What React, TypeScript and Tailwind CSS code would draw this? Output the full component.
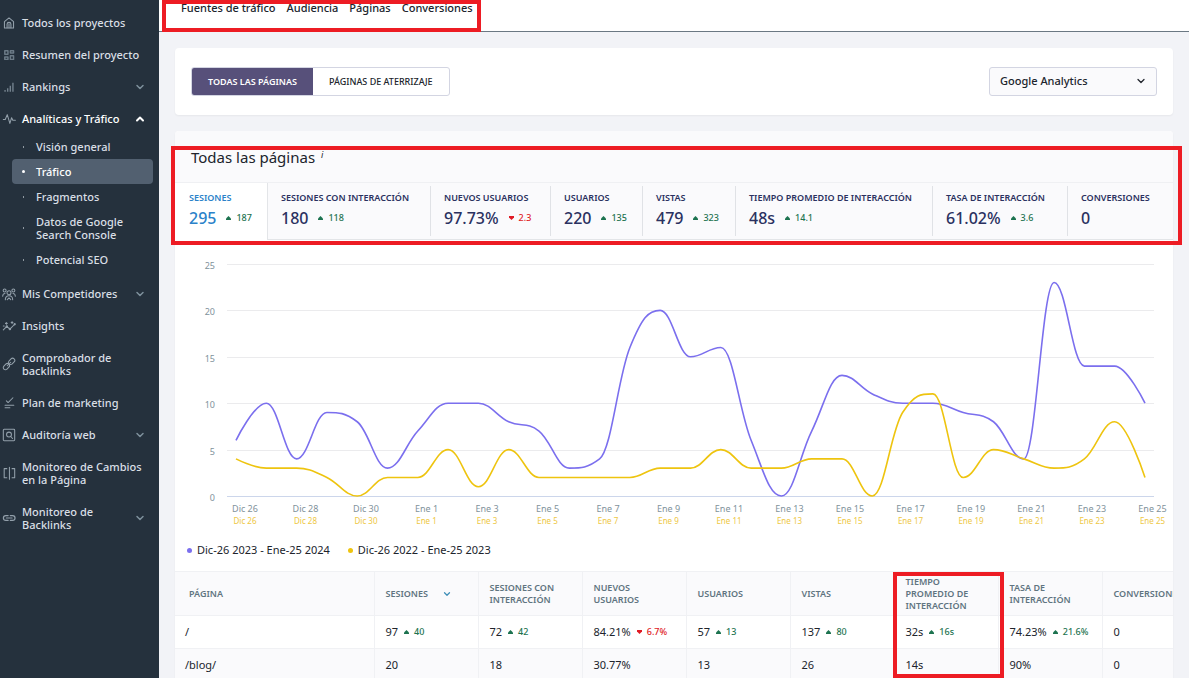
import React, { type ReactNode } from "react";
import { ChevronDown, ChevronUp } from "lucide-react";

type Item = {
  label: string;
  icon: ReactNode;
  chevron?: "down" | "up";
  active?: boolean;
  children?: string[];
};

const Icon = ({ children }: { children: ReactNode }) => (
  <svg
    viewBox="0 0 16 16"
    className="-my-1 h-3.5 w-3.5 shrink-0 text-[#93a0ab]"
    fill="none"
    stroke="currentColor"
    strokeWidth="1.2"
    strokeLinecap="round"
    strokeLinejoin="round"
    aria-hidden="true"
  >
    {children}
  </svg>
);

const items: Item[] = [
  {
    label: "Todos los proyectos",
    icon: (
      <Icon>
        <path d="M2.8 6.5 8 2.2l5.200 4.300v7.300H2.800z" />
        <path d="M5.800 13.500V9.500a2.200 2.200 0 0 1 4.400 0v4M8 9v4.500" />
      </Icon>
    ),
  },
  {
    label: "Resumen del proyecto",
    icon: (
      <Icon>
        <g className="text-[#6b7a86]" stroke="currentColor" strokeWidth="1.7">
          <rect x="3.2" y="3.2" width="3.6" height="4" />
          <rect x="9.6" y="3.2" width="3.6" height="2.400" />
          <rect x="3.2" y="10.400" width="3.6" height="2.600" />
          <rect x="9.6" y="8.800" width="3.6" height="4.200" />
        </g>
      </Icon>
    ),
  },
  {
    label: "Rankings",
    chevron: "down",
    icon: (
      <Icon>
        <path d="M3.500 11.500v2M6.500 9.500v4M9.500 6.500v7M12.500 3v10.500" strokeWidth="1.600" strokeLinecap="butt" className="text-[#73818d]" stroke="currentColor" />
      </Icon>
    ),
  },
  {
    label: "Analíticas y Tráfico",
    chevron: "up",
    active: true,
    icon: (
      <Icon>
        <path d="M1.500 8.500h2.200L6 3l3 10 2-6.500 1.300 3h3" />
      </Icon>
    ),
    children: ["Visión general", "Tráfico", "Fragmentos", "Datos de Google Search Console", "Potencial SEO"],
  },
  {
    label: "Mis Competidores",
    chevron: "down",
    icon: (
      <Icon>
        <circle cx="8" cy="6.5" r="2.3" />
        <circle cx="3" cy="4" r="1.7" />
        <circle cx="13" cy="4" r="1.7" />
        <path d="M3.8 14.5c0-3 1.8-4.6 4.2-4.6s4.2 1.6 4.2 4.6M.8 10.5c0-1.800 1-3 2.600-3M15.200 10.500c0-1.800-1-3-2.600-3M6 14.500l2-2 2 2" />
      </Icon>
    ),
  },
  {
    label: "Insights",
    icon: (
      <Icon>
        <path d="M1.500 12.500 5.500 8.500l3.500 3L14.500 6M5 4v2M4 5h2M11.500 3v2M10.500 4h2M1.500 8h1" />
        <circle cx="5.500" cy="8.500" r=".8" />
        <circle cx="9" cy="11.500" r=".8" />
        <circle cx="14.500" cy="6" r=".7" />
      </Icon>
    ),
  },
  {
    label: "Comprobador de backlinks",
    icon: (
      <Icon>
        <rect x="7" y="2.500" width="8" height="5" rx="2.500" transform="rotate(-45 11 5)" />
        <rect x="1" y="8.500" width="8" height="5" rx="2.500" transform="rotate(-45 5 11)" />
        <path d="M6 10l4-4" />
      </Icon>
    ),
  },
  {
    label: "Plan de marketing",
    icon: (
      <Icon>
        <path d="M5 5.500 7 7.500l5.500-5.500M3.500 10.500h10M3.500 13.500h5.500" />
      </Icon>
    ),
  },
  {
    label: "Auditoría web",
    chevron: "down",
    icon: (
      <Icon>
        <rect x="1.500" y="1.500" width="13" height="13" rx="1" />
        <circle cx="8" cy="7.500" r="2.800" />
        <path d="m10 9.700 2 2.300" />
      </Icon>
    ),
  },
  {
    label: "Monitoreo de Cambios en la Página",
    icon: (
      <Icon>
        <path d="M5.500 3h-3v10.500h3M11.500 3h3v10.500h-3M8.500 1.500v13.500" />
      </Icon>
    ),
  },
  {
    label: "Monitoreo de Backlinks",
    chevron: "down",
    icon: (
      <Icon>
        <path d="M7 5.200H4.400a2.800 2.800 0 0 0 0 5.600H7M9.500 5.200h2.600a2.800 2.800 0 0 1 0 5.600H9.500M5 8h6.500" strokeWidth="1.400" />
      </Icon>
    ),
  },
];

function Sidebar() {
  return (
    <aside className="w-[159px] shrink-0 bg-[#25313d] pt-[7px] text-[11px] leading-[13px] font-medium text-[#d9dfe5]">
      <nav aria-label="Principal">
        <ul>
          {items.map((item) => (
            <li key={item.label}>
              <a href="#" className={`flex min-h-8 items-center pt-[9px] pr-[13px] pb-2.5 pl-0.5 ${item.active ? "text-white" : ""}`}>
                {item.icon}
                <span className="ml-1.5 flex-1">{item.label}</span>
                {item.chevron === "down" && <ChevronDown className="h-3 w-3 shrink-0 text-[#7e909c]" strokeWidth={3} />}
                {item.chevron === "up" && <ChevronUp className="h-3 w-3 shrink-0" strokeWidth={4} />}
              </a>
              {item.children && (
                <ul className="-mt-px mb-1.5 pr-1.5 pl-3">
                  {item.children.map((c) => {
                    const current = c === "Tráfico";
                    return (
                      <li key={c}>
                        <a
                          href="#"
                          aria-current={current ? "page" : undefined}
                          className={`flex items-center rounded-sm py-1.5 pl-2.5 ${current ? "bg-[#526070] text-white" : ""}`}
                        >
                          <span className="flex w-[3px] justify-center">
                            <span className={`bg-current ${current ? "h-[3px] w-[3px] rounded-full" : "h-0.5 w-px opacity-60"}`} />
                          </span>
                          <span className="ml-[11px] max-w-24 flex-1">{c}</span>
                        </a>
                      </li>
                    );
                  })}
                </ul>
              )}
            </li>
          ))}
        </ul>
      </nav>
    </aside>
  );
}

function Trend({ value, down }: { value: string; down?: boolean }) {
  return (
    <span className={`inline-flex items-center gap-[5px] text-[9px] font-medium ${down ? "text-[#e01b25]" : "text-[#1d7350]"}`}>
      <svg viewBox="0 0 5 4" className="h-1 w-[5px]" fill="currentColor" aria-hidden="true">
        <path d={down ? "M0 0h5v1.500L2.500 4 0 1.500z" : "M0 4h5V2.500L2.500 0 0 2.500z"} />
      </svg>
      {value}
    </span>
  );
}

const metrics = [
  { label: "SESIONES", value: "295", delta: "187" },
  { label: "SESIONES CON INTERACCIÓN", value: "180", delta: "118" },
  { label: "NUEVOS USUARIOS", value: "97.73%", delta: "2.3", down: true },
  { label: "USUARIOS", value: "220", delta: "135" },
  { label: "VISTAS", value: "479", delta: "323" },
  { label: "TIEMPO PROMEDIO DE INTERACCIÓN", value: "48s", delta: "14.1" },
  { label: "TASA DE INTERACCIÓN", value: "61.02%", delta: "3.6" },
  { label: "CONVERSIONES", value: "0" },
];

function Metrics() {
  return (
    <div className="grid grid-cols-[93fr_163fr_120fr_92fr_93fr_197fr_135fr_105fr] border-t border-[#eff0f3]">
      {metrics.map((m, i) => (
        <button
          key={m.label}
          type="button"
          className={`flex text-left whitespace-nowrap ${
            i === 0 ? "border-r border-[#e3e5e8] bg-white text-[#2b82c9]" : "border-b border-[#e3e5e8] py-[3px] text-[#2a3160]"
          }`}
        >
          <span
            className={`flex flex-1 flex-col pb-2 ${i === 0 ? "pt-[9px] pl-3.5" : "pt-1.5 pl-[13px]"} ${
              i > 0 && i < metrics.length - 1 ? "border-r border-[#e0e2e6]" : ""
            }`}
          >
            <span className="text-[9px] leading-3 font-semibold">{m.label}</span>
            <span className="mt-1 flex items-center gap-2.5 text-[16px] leading-5 font-medium">
              {m.value}
              {m.delta && <Trend value={m.delta} down={m.down} />}
            </span>
          </span>
        </button>
      ))}
    </div>
  );
}

const current = [6, 10, 4, 9, 8, 3, 7, 10, 10, 8, 7, 3, 4, 16, 20, 15, 16, 6, 0, 7, 13, 11, 10, 10, 9, 8, 4, 23, 14, 14, 10];
const previous = [4, 3, 3, 2, 0, 2, 2, 5, 1, 5, 2, 2, 2, 2, 3, 3, 5, 3, 3, 4, 4, 0, 9, 11, 2, 5, 4, 3, 4, 8, 2];

const STEP = 30.3;
const LEFT = 61;
const BASE = 248;
const UNIT = 9.28;

/** Smooth path through the points; control points never overshoot a local extreme. */
function spline(values: number[]) {
  const pts = values.map((v, i) => ({ x: LEFT + i * STEP, y: BASE - v * UNIT }));
  let d = `M${pts[0].x} ${pts[0].y}`;
  let rx = pts[0].x;
  let ry = pts[0].y;
  for (let i = 1; i < pts.length; i++) {
    const p = pts[i];
    const last = pts[i - 1];
    const next = pts[i + 1];
    let lx = p.x;
    let ly = p.y;
    let nrx = p.x;
    let nry = p.y;
    if (next) {
      lx = (1.5 * p.x + last.x) / 2.5;
      ly = (1.5 * p.y + last.y) / 2.5;
      nrx = (1.5 * p.x + next.x) / 2.5;
      nry = (1.5 * p.y + next.y) / 2.5;
      const correction = ((nry - ly) * (nrx - p.x)) / (nrx - lx) + p.y - nry;
      ly += correction;
      nry += correction;
      if (ly > last.y && ly > p.y) {
        ly = Math.max(last.y, p.y);
        nry = 2 * p.y - ly;
      } else if (ly < last.y && ly < p.y) {
        ly = Math.min(last.y, p.y);
        nry = 2 * p.y - ly;
      }
      if (nry > next.y && nry > p.y) {
        nry = Math.max(next.y, p.y);
        ly = 2 * p.y - nry;
      } else if (nry < next.y && nry < p.y) {
        nry = Math.min(next.y, p.y);
        ly = 2 * p.y - nry;
      }
    }
    d += `C${rx} ${ry} ${lx} ${ly} ${p.x} ${p.y}`;
    rx = nrx;
    ry = nry;
  }
  return d;
}

const ticks = [25, 20, 15, 10, 5, 0];
const days = [
  "Dic 26", "Dic 28", "Dic 30", "Ene 1", "Ene 3", "Ene 5", "Ene 7", "Ene 9",
  "Ene 11", "Ene 13", "Ene 15", "Ene 17", "Ene 19", "Ene 21", "Ene 23", "Ene 25",
];

function Chart() {
  return (
    <svg viewBox="0 0 998 284" className="block w-full" role="img" aria-label="Sesiones por día">
      {ticks.map((t) => {
        const y = Math.round(BASE - t * UNIT) + 0.5;
        return (
          <g key={t}>
            <line x1="52" x2="979" y1={y} y2={y} stroke={t === 0 ? "#ccd6eb" : "#ebebed"} />
            <text x="40" y={y + 4} textAnchor="end" className="fill-[#7f929b] text-[9px]">
              {t}
            </text>
          </g>
        );
      })}
      <path d={spline(current)} fill="none" stroke="#7b6fee" strokeWidth="1.6" />
      <path d={spline(previous)} fill="none" stroke="#eec40f" strokeWidth="1.6" />
      {days.map((d, i) => (
        <g key={d} textAnchor="middle">
          <text x={70 + i * 60.5} y="264" className="fill-[#7f929b] text-[9px]">
            {d}
          </text>
          <text x={70 + i * 60.5} y="276" className="fill-[#eec743] text-[8px]">
            {d}
          </text>
        </g>
      ))}
    </svg>
  );
}

type Cell = { v: string; d?: string; down?: boolean };
const rows: { page: string; cells: Cell[] }[] = [
  {
    page: "/",
    cells: [
      { v: "97", d: "40" },
      { v: "72", d: "42" },
      { v: "84.21%", d: "6.7%", down: true },
      { v: "57", d: "13" },
      { v: "137", d: "80" },
      { v: "32s", d: "16s" },
      { v: "74.23%", d: "21.6%" },
      { v: "0" },
    ],
  },
  {
    page: "/blog/",
    cells: ["20", "18", "30.77%", "13", "26", "14s", "90%", "0"].map((v) => ({ v })),
  },
];

const columns = [
  "SESIONES", "SESIONES CON INTERACCIÓN", "NUEVOS USUARIOS", "USUARIOS", "VISTAS",
  "TIEMPO PROMEDIO DE INTERACCIÓN", "TASA DE INTERACCIÓN", "CONVERSIONES",
];

function PagesTable() {
  return (
    <div className="overflow-hidden">
      <table className="w-full min-w-[1031px] table-fixed text-left">
        <thead>
          <tr className="h-11 border-y border-[#f0f1f4] bg-[#fafafc] text-[9px] leading-3 text-[#5f7480]">
            <th scope="col" className="w-[199px] border-r border-[#f0f1f4] pl-3.5 font-semibold">PÁGINA</th>
            {columns.map((c, i) => (
              <th key={c} scope="col" className="w-[104px] border-r border-[#f0f1f4] pr-2 pl-[11px] font-semibold">
                {i === 0 ? (
                  <button type="button" className="flex items-center gap-3.5">
                    {c}
                    <ChevronDown className="h-2.5 w-2.5 text-[#3f8fb8]" strokeWidth={3} />
                  </button>
                ) : (
                  c
                )}
              </th>
            ))}
          </tr>
        </thead>
        <tbody>
          {rows.map((r) => (
            <tr key={r.page} className="h-[33px] border-b border-[#f0f1f4] bg-white text-[11px] whitespace-nowrap text-[#20242c] even:bg-[#fafafc]">
              <td className="border-r border-[#f0f1f4] pl-2.5">
                <a href="#">{r.page}</a>
              </td>
              {r.cells.map((c, i) => (
                <td key={i} className="border-r border-[#f0f1f4] pl-[11px]">
                  <span className="flex items-center gap-1.5">
                    {c.v}
                    {c.d && <Trend value={c.d} down={c.down} />}
                  </span>
                </td>
              ))}
            </tr>
          ))}
        </tbody>
      </table>
    </div>
  );
}

export default function App() {
  return (
    <div className="relative flex h-screen overflow-hidden bg-white pr-[3px] font-['Noto_Sans',sans-serif] text-[11px] text-[#20242c]">
      <Sidebar />
      <div className="flex min-w-0 flex-1 flex-col bg-[#f2f3f7]">
        <header className="h-8 shrink-0 border-b border-[#6b7883] bg-white pl-[22px]">
          <nav aria-label="Secciones" className="flex gap-[11px] leading-4 font-medium">
            <a href="#">Fuentes de tráfico</a>
            <a href="#">Audiencia</a>
            <a href="#">Páginas</a>
            <a href="#">Conversiones</a>
          </nav>
        </header>
        <main className="min-h-0 flex-1 p-4">
          <section className="flex items-center justify-between rounded bg-white px-4 py-[19px] shadow-xs">
            <div className="flex h-[29px] overflow-hidden rounded-[3px] border border-[#d3d5e2] text-[9px]">
              <button type="button" aria-pressed="true" className="bg-[#57507a] px-4 font-semibold text-white">
                TODAS LAS PÁGINAS
              </button>
              <button type="button" aria-pressed="false" className="px-4 font-medium">
                PÁGINAS DE ATERRIZAJE
              </button>
            </div>
            <div className="relative">
              <select
                aria-label="Google Analytics"
                className="block h-[29px] w-[168px] appearance-none rounded-[3px] border border-[#d3d5e2] bg-[#fafafc] pr-7 pl-2.5 text-[11px] font-medium"
              >
                <option>Google Analytics</option>
              </select>
              <ChevronDown className="pointer-events-none absolute top-2 right-2.5 h-3 w-3" strokeWidth={2.5} />
            </div>
          </section>

          <section className="mt-4 rounded-t bg-white shadow-xs">
            <div className="rounded-t bg-[#fafafc]">
              <h1 className="flex h-[51px] items-center px-4 pt-px text-[15px]">
                Todas las páginas
                <span className="ml-1.5 pb-1 text-[9px] italic">i</span>
              </h1>
              <Metrics />
            </div>
            <div className="pt-2">
              <Chart />
            </div>
            <ul className="flex gap-[18px] px-3 pt-2.5 pb-[13px] leading-4">
              <li className="flex items-center gap-[5px]">
                <span className="h-[5px] w-[5px] rounded-full bg-[#7b6fee]" />
                Dic-26 2023 - Ene-25 2024
              </li>
              <li className="flex items-center gap-[5px]">
                <span className="h-[5px] w-[5px] rounded-full bg-[#eec40f]" />
                Dic-26 2022 - Ene-25 2023
              </li>
            </ul>
            <PagesTable />
          </section>
        </main>
      </div>
      <div className="pointer-events-none absolute top-0 left-[162px] h-8 w-[319px] border-4 border-[#ed1c24]" />
      <div className="pointer-events-none absolute top-[146px] left-[171px] h-[99px] w-[1011px] border-4 border-[#ed1c24]" />
      <div className="pointer-events-none absolute top-[572px] left-[893px] h-[106px] w-[111px] border-4 border-[#ed1c24]" />
    </div>
  );
}
